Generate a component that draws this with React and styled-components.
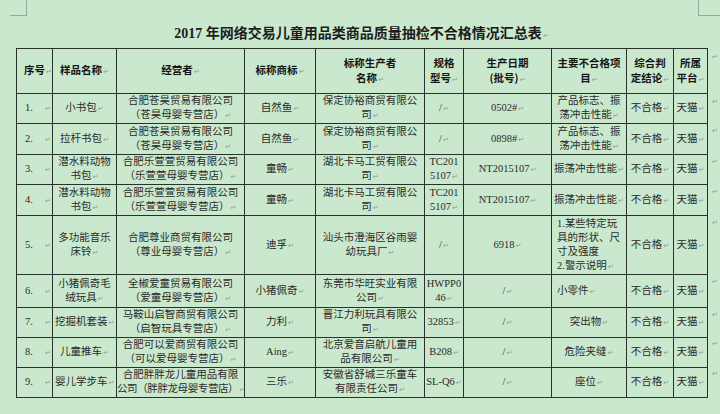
import React from 'react';
import styled, { createGlobalStyle } from 'styled-components';

const GlobalStyle = createGlobalStyle`
  html, body {
    margin: 0;
    padding: 0;
    background: #cae8cd;
  }
`;

const Page = styled.div`
  position: relative;
  width: 720px;
  height: 414px;
  overflow: hidden;
  background: #cae8cd;
  font-family: "Liberation Serif", "Noto Sans CJK SC", serif;
  color: #2a2a2a;
  padding-top: 24px;
  box-sizing: border-box;

  &::before {
    content: '';
    position: absolute;
    left: 10px;
    top: -1px;
    width: 16px;
    height: 16px;
    border-right: 1px solid #93a898;
    border-bottom: 1px solid #93a898;
  }
  &::after {
    content: '';
    position: absolute;
    left: 698px;
    top: -1px;
    width: 22px;
    height: 16px;
    border-left: 1px solid #93a898;
    border-bottom: 1px solid #93a898;
  }
`;

const Title = styled.h1`
  margin: 0 0 4px 16px;
  width: 691px;
  height: 20px;
  line-height: 20px;
  text-align: center;
  font-size: 14px;
  font-weight: 700;
  color: #1c1c1c;
  font-family: "Liberation Serif", "Noto Sans CJK SC", serif;
`;

const Mark = styled.span`
  font-family: "DejaVu Sans", sans-serif;
  font-size: 7px;
  font-weight: 400;
  color: #8a9c8e;
  margin-left: ${p => p.$gap || 1}px;
`;

const TableWrap = styled.div`
  display: flex;
  align-items: flex-start;
  margin-left: 16px;
`;

const Table = styled.table`
  width: 691px;
  table-layout: fixed;
  border-collapse: collapse;
  border: 1px solid #27332a;
`;

const Row = styled.tr`
  height: ${p => p.$h}px;
`;

const HeadCell = styled.th`
  border: 1px solid #27332a;
  padding: 0 2px;
  font-family: "Noto Sans CJK SC", sans-serif;
  font-size: 10.5px;
  font-weight: 700;
  line-height: 15px;
  color: #151515;
  text-align: ${p => p.$align || 'center'};
  padding-left: ${p => p.$pl || 2}px;
  vertical-align: middle;
  white-space: nowrap;
`;

const Cell = styled.td`
  border: 1px solid #27332a;
  padding: 0 ${p => (p.$tight ? 0 : 2)}px;
  padding-left: ${p => (p.$tight ? 0 : p.$pl || 2)}px;
  font-size: 10.5px;
  line-height: 14px;
  text-align: ${p => p.$align || 'center'};
  vertical-align: middle;
  white-space: nowrap;
`;

const Line = styled.div`
  white-space: nowrap;
  letter-spacing: ${p => (p.$squeeze ? '-0.4px' : '0')};
`;

const RowEnds = styled.div`
  display: flex;
  flex-direction: column;
`;

const RowEnd = styled.div`
  height: ${p => p.$h}px;
  line-height: 12px;
  padding-left: 3px;
`;

const widths = [36, 64, 128, 71, 109, 39, 88, 75, 47, 34];

const headers = [
  { lines: ['序号'], align: 'left', pl: 7 },
  { lines: ['样品名称'] },
  { lines: ['经营者'] },
  { lines: ['标称商标'] },
  { lines: ['标称生产者', '名称'] },
  { lines: ['规格', '型号'] },
  { lines: ['生产日期', '(批号)'] },
  { lines: ['主要不合格项', '目'] },
  { lines: ['综合判', '定结论'] },
  { lines: ['所属', '平台'] },
];

const rows = [
  { no: '1.', name: ['小书包'], op: ['合肥苍昊贸易有限公司', '（苍昊母婴专营店）'], brand: ['自然鱼'], maker: ['保定协裕商贸有限公', '司'], model: ['/'], date: ['0502#'], item: ['产品标志、振', '荡冲击性能'], h: 29 },
  { no: '2.', name: ['拉杆书包'], op: ['合肥苍昊贸易有限公司', '（苍昊母婴专营店）'], brand: ['自然鱼'], maker: ['保定协裕商贸有限公', '司'], model: ['/'], date: ['0898#'], item: ['产品标志、振', '荡冲击性能'], h: 31 },
  { no: '3.', name: ['潜水料动物', '书包'], op: ['合肥乐萱萱贸易有限公司', '（乐萱萱母婴专营店）'], brand: ['童畅'], maker: ['湖北卡马工贸有限公', '司'], model: ['TC201', '5107'], date: ['NT2015107'], item: ['振荡冲击性能'], h: 30 },
  { no: '4.', name: ['潜水料动物', '书包'], op: ['合肥乐萱萱贸易有限公司', '（乐萱萱母婴专营店）'], brand: ['童畅'], maker: ['湖北卡马工贸有限公', '司'], model: ['TC201', '5107'], date: ['NT2015107'], item: ['振荡冲击性能'], h: 31 },
  { no: '5.', name: ['多功能音乐', '床铃'], op: ['合肥尊业商贸有限公司', '（尊业母婴专营店）'], brand: ['迪孚'], maker: ['汕头市澄海区谷雨婴', '幼玩具厂'], model: ['/'], date: ['6918'], item: ['1.某些特定玩', '具的形状、尺', '寸及强度', '2.警示说明'], itemAlign: 'left', h: 59 },
  { no: '6.', name: ['小猪佩奇毛', '绒玩具'], op: ['全椒爱童贸易有限公司', '（爱童母婴专营店）'], brand: ['小猪佩奇'], maker: ['东莞市华旺实业有限', '公司'], model: ['HWPP0', '46'], date: ['/'], item: ['小零件'], itemAlign: 'left', h: 33 },
  { no: '7.', name: ['挖掘机套装'], op: ['马鞍山启智商贸有限公司', '（启智玩具专营店）'], brand: ['力利'], maker: ['晋江力利玩具有限公', '司'], model: ['32853'], date: ['/'], item: ['突出物'], h: 29 },
  { no: '8.', name: ['儿童推车'], op: ['合肥可以爱商贸有限公司', '（可以爱母婴专营店）'], brand: ['Aing'], maker: ['北京爱音启航儿童用', '品有限公司'], model: ['B208'], date: ['/'], item: ['危险夹缝'], h: 30 },
  { no: '9.', name: ['婴儿学步车'], op: ['合肥胖胖龙儿童用品有限', '公司（胖胖龙母婴专营店）'], brand: ['三乐'], maker: ['安徽省舒城三乐童车', '有限责任公司'], model: ['SL-Q6'], date: ['/'], item: ['座位'], h: 30 },
];

function Lines({ lines }) {
  return lines.map((l, i) => (
    <Line key={i} $squeeze={l.length > 11}>
      {l}
      {i === lines.length - 1 && <Mark>↵</Mark>}
    </Line>
  ));
}

export default function App() {
  return (
    <Page>
      <GlobalStyle />
      <Title>
        2017 年网络交易儿童用品类商品质量抽检不合格情况汇总表<Mark>↵</Mark>
      </Title>
      <TableWrap>
        <Table>
          <colgroup>
            {widths.map((w, i) => <col key={i} style={{ width: w }} />)}
          </colgroup>
          <thead>
            <Row $h={45}>
              {headers.map((h, i) => (
                <HeadCell key={i} $align={h.align} $pl={h.pl}>
                  <Lines lines={h.lines} />
                </HeadCell>
              ))}
            </Row>
          </thead>
          <tbody>
            {rows.map(r => (
              <Row key={r.no} $h={r.h}>
                <Cell $align="left" $pl={8}>{r.no}<Mark $gap={12}>↵</Mark></Cell>
                <Cell><Lines lines={r.name} /></Cell>
                <Cell $tight><Lines lines={r.op} /></Cell>
                <Cell><Lines lines={r.brand} /></Cell>
                <Cell $tight><Lines lines={r.maker} /></Cell>
                <Cell $tight><Lines lines={r.model} /></Cell>
                <Cell><Lines lines={r.date} /></Cell>
                <Cell $align={r.itemAlign} $pl={r.itemAlign ? 5 : 2}><Lines lines={r.item} /></Cell>
                <Cell $tight><Lines lines={['不合格']} /></Cell>
                <Cell $tight><Lines lines={['天猫']} /></Cell>
              </Row>
            ))}
          </tbody>
        </Table>
        <RowEnds>
          {[45, ...rows.map(r => r.h)].map((h, i) => (
            <RowEnd key={i} $h={h}><Mark>↵</Mark></RowEnd>
          ))}
        </RowEnds>
      </TableWrap>
    </Page>
  );
}
